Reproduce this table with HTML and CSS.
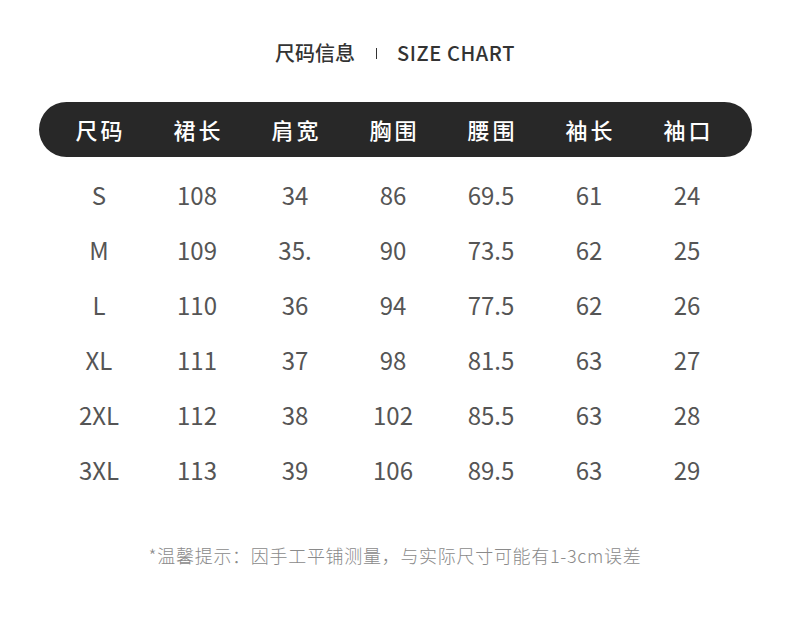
FILE: index.html
```html
<!DOCTYPE html>
<html lang="zh-CN">
<head>
<meta charset="utf-8">
<link rel="stylesheet" href="styles.css">
</head>
<body>
<div class="page">
  <div class="title">
    <span class="title-cn">尺码信息</span>
    <span class="title-sep"></span>
    <span class="title-en">SIZE CHART</span>
  </div>
  <div class="table">
    <div class="head">
      <div>尺码</div><div>裙长</div><div>肩宽</div><div>胸围</div><div>腰围</div><div>袖长</div><div>袖口</div>
    </div>
    <div class="row"><div>S</div><div>108</div><div>34</div><div>86</div><div>69.5</div><div>61</div><div>24</div></div>
    <div class="row"><div>M</div><div>109</div><div>35.</div><div>90</div><div>73.5</div><div>62</div><div>25</div></div>
    <div class="row"><div>L</div><div>110</div><div>36</div><div>94</div><div>77.5</div><div>62</div><div>26</div></div>
    <div class="row"><div>XL</div><div>111</div><div>37</div><div>98</div><div>81.5</div><div>63</div><div>27</div></div>
    <div class="row"><div>2XL</div><div>112</div><div>38</div><div>102</div><div>85.5</div><div>63</div><div>28</div></div>
    <div class="row"><div>3XL</div><div>113</div><div>39</div><div>106</div><div>89.5</div><div>63</div><div>29</div></div>
  </div>
  <div class="note">*温馨提示：因手工平铺测量，与实际尺寸可能有1-3cm误差</div>
</div>
</body>
</html>
```
FILE: styles.css
```css
* { box-sizing: border-box; }
html, body { margin: 0; padding: 0; background: #ffffff; }
body {
  font-family: "Noto Sans CJK SC", "Noto Sans", sans-serif;
  width: 790px;
  height: 642px;
  overflow: hidden;
}
.page {
  display: flex;
  flex-direction: column;
  align-items: flex-start;
  padding-top: 38px;
}
.title {
  align-self: center;
  display: flex;
  align-items: center;
  height: 30px;
  color: #333333;
}
.title-cn {
  font-size: 20px;
  line-height: 30px;
  font-weight: 500;
}
.title-sep {
  width: 1px;
  height: 11px;
  background: #333;
  margin: 0 20px 0 21px;
}
.title-en {
  font-size: 20px;
  line-height: 30px;
  font-weight: 500;
  letter-spacing: 0.6px;
}
.table {
  margin-top: 34px;
  margin-left: 39px;
  display: flex;
  flex-direction: column;
}
.head, .row {
  display: grid;
  grid-template-columns: repeat(7, 98px);
  text-align: center;
}
.head {
  width: 713px;
  height: 55px;
  background: #282828;
  border-radius: 28px;
  padding: 0 16px 0 11px;
  color: #ffffff;
  font-size: 22px;
  font-weight: 500;
  letter-spacing: 3px;
  align-items: center;
  line-height: 49px;
  margin-bottom: 10px;
}
.head > div { padding-left: 3px; }
.row {
  padding-left: 11px;
  height: 55px;
  line-height: 55px;
  font-size: 24px;
  color: #555555;
}
.note {
  align-self: center;
  margin-top: 45px;
  font-size: 18px;
  font-weight: 300;
  letter-spacing: 0.7px;
  color: #8a8a8a;
  line-height: 26px;
}
```
